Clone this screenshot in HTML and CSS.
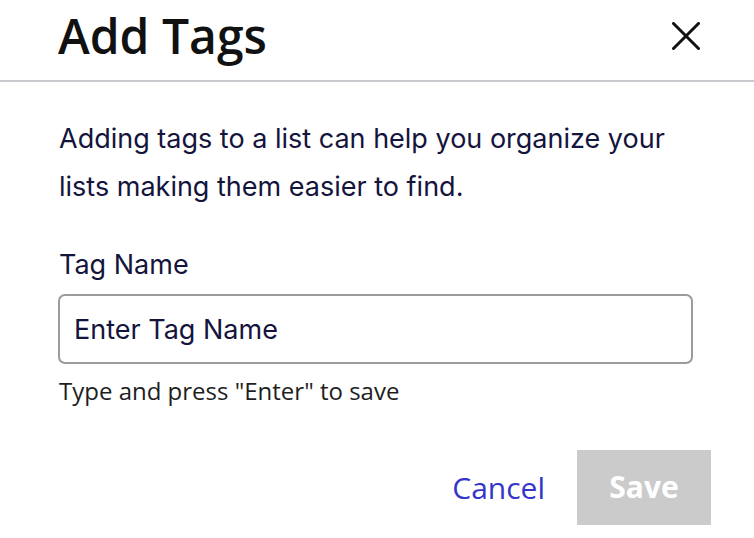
FILE: index.html
```html
<!DOCTYPE html>
<html>
<head>
<meta charset="utf-8">
<link rel="stylesheet" href="styles.css">
</head>
<body>
<div class="modal">
  <header class="modal-header">
    <h1 class="title">Add Tags</h1>
    <button class="close" aria-label="Close">
      <svg width="28" height="28" viewBox="0 0 28 28"><path d="M1.5 1.5 L26.5 26.5 M26.5 1.5 L1.5 26.5" stroke="#111" stroke-width="3" stroke-linecap="round" fill="none"/></svg>
    </button>
  </header>
  <div class="modal-body">
    <p class="desc">Adding tags to a list can help you organize your lists making them easier to find.</p>
    <label class="label" for="tag">Tag Name</label>
    <input class="input" id="tag" type="text" placeholder="Enter Tag Name">
    <div class="hint">Type and press "Enter" to save</div>
    <div class="actions">
      <button class="cancel">Cancel</button>
      <button class="save">Save</button>
    </div>
  </div>
</div>
</body>
</html>
```
FILE: styles.css
```css
html, body { margin: 0; padding: 0; background: #fff; }
.modal { width: 754px; }
.modal-header {
  box-sizing: border-box;
  height: 82px;
  border-bottom: 2px solid #c9c9cd;
  display: flex;
  align-items: flex-start;
  justify-content: space-between;
  padding: 12px 54px 0 58px;
}
.title {
  margin: 0;
  font-family: "Open Sans", sans-serif;
  font-weight: 600;
  font-size: 48px;
  color: #111;
  line-height: 48px;
}
.close {
  background: none; border: 0; padding: 0; width: 28px; height: 28px;
  margin-top: 10px;
  display: block;
}
.close svg { display: block; }
.modal-body { padding: 0 43px 0 59px; }
.desc {
  margin: 0;
  padding-top: 33px;
  font-family: Inter, sans-serif;
  font-size: 27px;
  line-height: 48px;
  color: #14143c;
}
.label {
  display: block;
  margin-top: 38px;
  font-family: Inter, sans-serif;
  font-size: 27px;
  line-height: 32px;
  color: #14143c;
}
.input {
  display: block;
  box-sizing: border-box;
  width: 635px;
  height: 70px;
  margin: 13px 0 0 -1px;
  border: 2px solid #9b9b9b;
  border-radius: 7px;
  padding: 0 14px;
  font-family: Inter, sans-serif;
  font-size: 27px;
  color: #14143c;
  outline: none;
}
.input::placeholder { color: #14143c; opacity: 1; }
.hint {
  margin-top: 13px;
  font-family: "Open Sans", sans-serif;
  font-size: 24px;
  line-height: 28px;
  color: #1e1e1e;
}
.actions {
  display: flex;
  justify-content: flex-end;
  align-items: center;
  gap: 32px;
  margin-top: 45px;
}
.cancel {
  background: none; border: 0; padding: 0;
  font-family: "Open Sans", sans-serif;
  font-size: 30px;
  color: #3535cc;
}
.save {
  width: 134px; height: 75px;
  background: #cbcbcb; border: 0;
  padding: 0 0 2px;
  font-family: "Open Sans", sans-serif;
  font-weight: 700;
  font-size: 30px;
  color: #fff;
}
```
